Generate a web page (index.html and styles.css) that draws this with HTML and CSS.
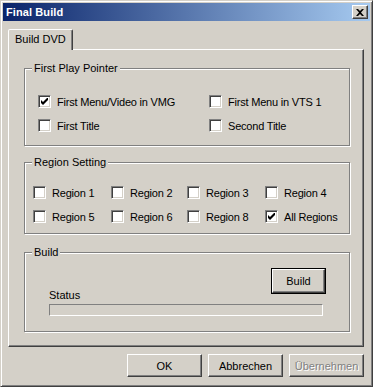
FILE: index.html
```html
<!DOCTYPE html>
<html lang="de">
<head>
    <meta charset="UTF-8">
    <title>Final Build</title>
    <link rel="stylesheet" href="styles.css">
</head>
<body>

    <div class="window">
        <div class="titlebar">
            <span class="title">Final Build</span>
            <span class="close">
                <svg width="8" height="7" viewBox="0 0 8 7"><path d="M0 0h2l2 2 2-2h2L5 3.5 8 7H6L4 5 2 7H0l3-3.5z" fill="#000"/></svg>
            </span>
        </div>

        <div class="content">
            <div class="tabs">
                <div class="tab">Build DVD</div>
            </div>

            <div class="panel">
                <div class="group group-play">
                    <span class="legend">First Play Pointer</span>
                    <div class="grid grid-2">
                        <label class="check"><span class="box checked"></span>First Menu/Video in VMG</label>
                        <label class="check"><span class="box"></span>First Menu in VTS 1</label>
                        <label class="check"><span class="box"></span>First Title</label>
                        <label class="check"><span class="box"></span>Second Title</label>
                    </div>
                </div>

                <div class="group group-region">
                    <span class="legend">Region Setting</span>
                    <div class="grid grid-4">
                        <label class="check"><span class="box"></span>Region 1</label>
                        <label class="check"><span class="box"></span>Region 2</label>
                        <label class="check"><span class="box"></span>Region 3</label>
                        <label class="check"><span class="box"></span>Region 4</label>
                        <label class="check"><span class="box"></span>Region 5</label>
                        <label class="check"><span class="box"></span>Region 6</label>
                        <label class="check"><span class="box"></span>Region 8</label>
                        <label class="check"><span class="box checked"></span>All Regions</label>
                    </div>
                </div>

                <div class="group group-build">
                    <span class="legend">Build</span>
                    <div class="build-row">
                        <button class="btn btn-build">Build</button>
                    </div>
                    <div class="status">Status</div>
                    <div class="progress"></div>
                </div>
            </div>

            <div class="buttons">
                <button class="btn">OK</button>
                <button class="btn">Abbrechen</button>
                <button class="btn disabled">Übernehmen</button>
            </div>
        </div>
    </div>

</body>
</html>
```

FILE: styles.css
```css
/* Win2000 Dialog */
body {
    margin: 0;
    background: #d4d0c8;
    font-family: 'Liberation Sans', Arial, sans-serif;
    font-size: 11px;
    color: #000;
}

.window {
    width: 373px;
    height: 387px;
    box-sizing: border-box;
    background: #d4d0c8;
    border: 1px solid;
    border-color: #d4d0c8 #404040 #404040 #d4d0c8;
    box-shadow: inset 1px 1px 0 #fff, inset -1px -1px 0 #808080;
    padding: 2px;
}

.titlebar {
    height: 18px;
    display: flex;
    align-items: center;
    justify-content: space-between;
    background: linear-gradient(to right, #0a246a, #a6caf0);
    padding: 0 2px 0 3px;
}

.title {
    color: #fff;
    font-weight: bold;
    font-size: 11px;
    letter-spacing: 0.1px;
}

.close {
    width: 16px;
    height: 14px;
    box-sizing: border-box;
    background: #d4d0c8;
    border: 1px solid;
    border-color: #fff #404040 #404040 #fff;
    box-shadow: inset -1px -1px 0 #808080;
    display: flex;
    align-items: center;
    justify-content: center;
}

.content {
    padding: 6px 6px 0 5px;
}

.tabs {
    display: flex;
    height: 22px;
}

.tab {
    margin-top: 2px;
    width: 65px;
    box-sizing: border-box;
    border: 1px solid;
    border-bottom: none;
    border-color: #fff #404040 transparent #fff;
    box-shadow: inset -1px 0 0 #808080;
    border-radius: 2px 2px 0 0;
    padding: 3px 0 0 6px;
    position: relative;
    z-index: 1;
    background: #d4d0c8;
    height: 21px;
}

.panel {
    height: 298px;
    box-sizing: border-box;
    border: 1px solid;
    border-color: #fff #404040 #404040 #fff;
    box-shadow: inset -1px -1px 0 #808080;
    padding: 18px 13px 0 15px;
    display: flex;
    flex-direction: column;
}

.group {
    position: relative;
    border: 1px solid #808080;
    box-shadow: inset 1px 1px 0 #fff, 1px 1px 0 #fff;
    box-sizing: border-box;
}

.legend {
    position: absolute;
    top: -7px;
    left: 7px;
    padding: 0 2px;
    background: #d4d0c8;
    line-height: 13px;
}

.group-play {
    height: 78px;
    padding: 26px 0 0 13px;
}

.group-region {
    margin-top: 16px;
    height: 72px;
    padding: 23px 0 0 8px;
}

.group-build {
    margin-top: 18px;
    height: 80px;
    padding: 16px 0 0 24px;
}

.grid {
    display: grid;
    row-gap: 11px;
}

.grid-2 {
    grid-template-columns: 171px 130px;
}

.grid-4 {
    grid-template-columns: 78px 76px 78px 80px;
}

.check {
    display: flex;
    align-items: center;
    gap: 6px;
    height: 13px;
    white-space: nowrap;
    letter-spacing: -0.2px;
}

.box {
    width: 13px;
    height: 13px;
    box-sizing: border-box;
    background: #fff;
    border: 1px solid;
    border-color: #808080 #fff #fff #808080;
    box-shadow: inset 1px 1px 0 #404040, inset -1px -1px 0 #d4d0c8;
    flex: none;
    position: relative;
}

.box.checked::after {
    content: "";
    position: absolute;
    left: 2px;
    top: 2px;
    width: 7px;
    height: 7px;
    background: url("data:image/svg+xml,%3Csvg xmlns='http://www.w3.org/2000/svg' width='7' height='7'%3E%3Cpath d='M0 2v3l2 2 5-5V-1L2 4z' fill='%23000'/%3E%3C/svg%3E") no-repeat;
}

.build-row {
    display: flex;
    justify-content: flex-end;
    padding-right: 24px;
}

.btn {
    font-family: 'Liberation Sans', Arial, sans-serif;
    font-size: 11px;
    width: 75px;
    height: 23px;
    box-sizing: border-box;
    background: #d4d0c8;
    border: 1px solid;
    border-color: #fff #404040 #404040 #fff;
    box-shadow: inset -1px -1px 0 #808080;
    padding: 0;
    color: #000;
}

.btn-build {
    width: 53px;
    height: 24px;
    outline: 1px solid #000;
    outline-offset: 0;
}

.status {
    margin-top: -4px;
    line-height: 13px;
}

.disabled {
    color: #808080;
    text-shadow: 1px 1px 0 #fff;
}

.progress {
    margin-top: 2px;
    width: 274px;
    height: 12px;
    box-sizing: border-box;
    border: 1px solid;
    border-color: #808080 #fff #fff #808080;
}

.buttons {
    display: flex;
    justify-content: flex-end;
    gap: 6px;
    padding: 7px 0 0 0;
}
```
